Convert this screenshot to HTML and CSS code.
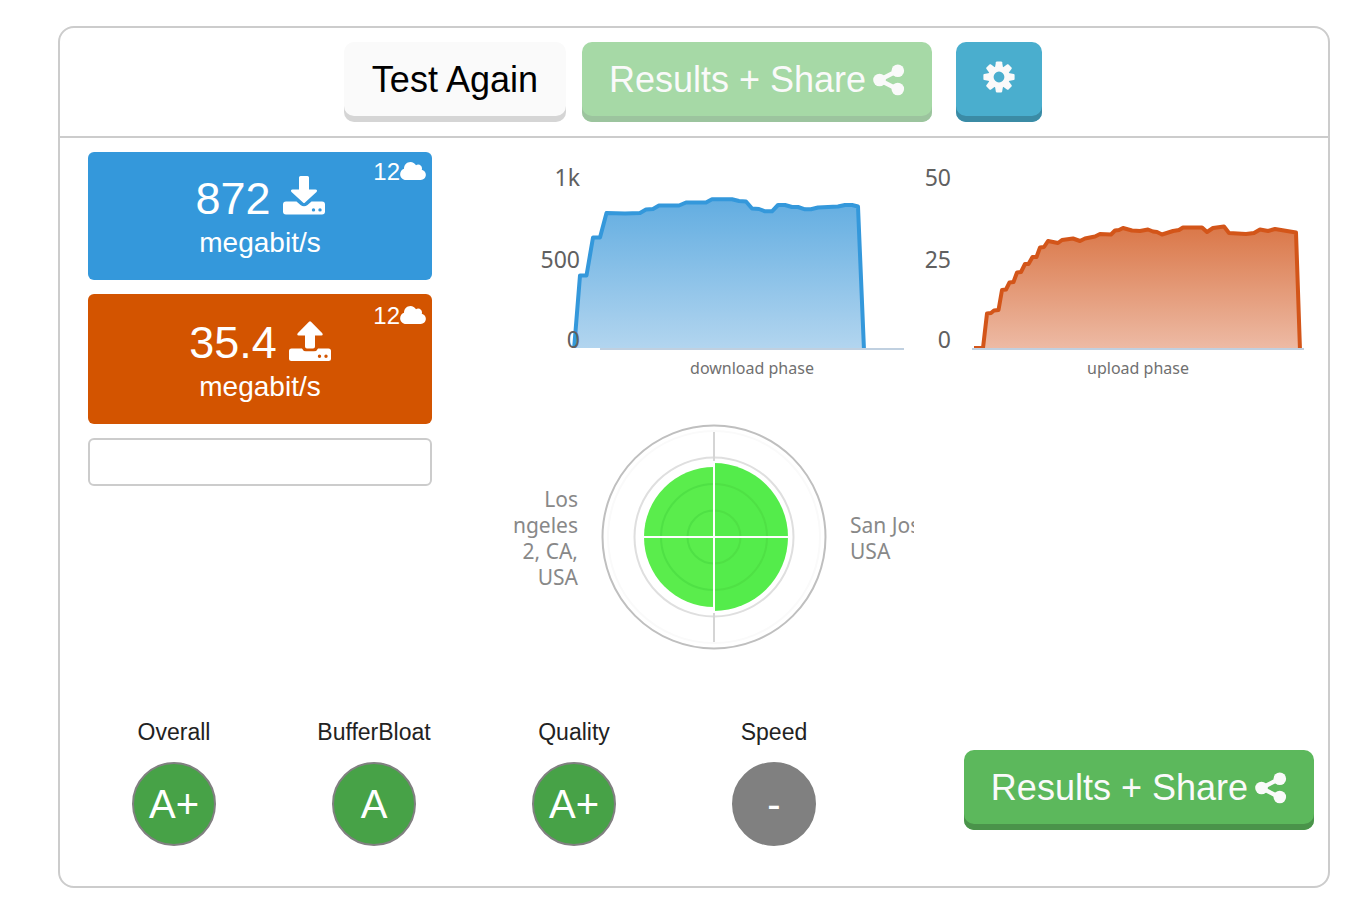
FILE: index.html
```html
<!DOCTYPE html>
<html lang="en">
<head>
<meta charset="utf-8">
<title>Speed Test</title>
<meta name="viewport" content="width=device-width, initial-scale=1">
<link rel="stylesheet" href="styles.css">
</head>
<body>
<svg class="sprite" aria-hidden="true">
  <symbol id="share" viewBox="0 0 32 32">
    <path d="M25 6.500 6.500 16 25 25.500" fill="none" stroke="currentColor" stroke-width="4.400"/>
    <circle cx="6.500" cy="16" r="6.300" fill="currentColor"/>
    <circle cx="24.800" cy="6.800" r="6.300" fill="currentColor"/>
    <circle cx="24.800" cy="25" r="6.300" fill="currentColor"/>
  </symbol>
  <symbol id="cloud" viewBox="0 32 640 448">
    <path fill="currentColor" d="M537.600 226.600c4.100-10.700 6.400-22.400 6.400-34.600 0-53-43-96-96-96-19.700 0-38.100 6-53.300 16.200C367 64.200 315.300 32 256 32c-88.400 0-160 71.600-160 160 0 2.700.1 5.400.2 8.100C40.200 219.800 0 273.200 0 336c0 79.500 64.500 144 144 144h368c70.700 0 128-57.300 128-128 0-61.900-44-113.600-102.400-125.400z"/>
  </symbol>
</svg>
<main class="panel">
  <header class="toolbar">
    <button class="btn btn-plain" type="button">Test Again</button>
    <button class="btn btn-share is-faded" type="button">Results + Share <svg class="icon-share"><use href="#share"/></svg></button>
    <button class="btn btn-settings" type="button" aria-label="Settings">
      <svg class="icon-cog" viewBox="-16 -16 32 32">
        <defs><path id="tooth" d="M-4-9.500 -3.100-14.800Q-2.900-15.600-2.100-15.600H2.100Q2.900-15.600 3.100-14.800L4-9.500Z"/></defs>
        <g fill="currentColor">
          <path fill-rule="evenodd" d="M0-10.800A10.800 10.800 0 1 1 0 10.800 10.800 10.800 0 1 1 0-10.800ZM0-5.400A5.400 5.400 0 1 0 0 5.400 5.400 5.400 0 1 0 0-5.400Z"/>
          <use href="#tooth"/><use href="#tooth" transform="rotate(45)"/><use href="#tooth" transform="rotate(90)"/><use href="#tooth" transform="rotate(135)"/>
          <use href="#tooth" transform="rotate(180)"/><use href="#tooth" transform="rotate(225)"/><use href="#tooth" transform="rotate(270)"/><use href="#tooth" transform="rotate(315)"/>
        </g>
      </svg>
    </button>
  </header>

  <div class="results">
    <section class="meters">
      <article class="meter meter-down">
        <span class="streams">12<svg class="icon-cloud"><use href="#cloud"/></svg></span>
        <div class="speed">872
          <svg class="icon-tray" viewBox="0 0 42 40">
            <path fill="currentColor" d="M17.500 1H24.500Q26 1 26 2.500V14.500H32.500Q35 15 33.500 17L22 27.500Q21 28.500 20 27.500L8.500 17Q7 15 9.500 14.500H16V2.500Q16 1 17.500 1Z"/>
            <path fill="currentColor" fill-rule="evenodd" d="M3 26.500H13.500L17.500 30Q21 32.500 24.500 30L28.500 26.500H39Q42 26.500 42 29.500V36.500Q42 39.500 39 39.500H3Q0 39.500 0 36.500V29.500Q0 26.500 3 26.500ZM30.500 33.200a1.700 1.700 0 1 0 0 3.400 1.700 1.700 0 1 0 0-3.400ZM37 33.200a1.700 1.700 0 1 0 0 3.400 1.700 1.700 0 1 0 0-3.400Z"/>
          </svg>
        </div>
        <div class="unit">megabit/s</div>
      </article>
      <article class="meter meter-up">
        <span class="streams">12<svg class="icon-cloud"><use href="#cloud"/></svg></span>
        <div class="speed">35.4
          <svg class="icon-tray" viewBox="0 0 42 40">
            <path fill="currentColor" d="M20 .8Q21 -.2 22 .8L33.300 12.200Q34.500 14.500 32.300 14.500H26V25.500Q26 27.500 24 27.500H18Q16 27.500 16 25.500V14.500H9.700Q7.500 14.500 8.700 12.200Z"/>
            <path fill="currentColor" fill-rule="evenodd" d="M2.500 27.500H13Q14 30.200 17 30.200H25Q28 30.200 29 27.500H39.500Q42 27.500 42 30V37.500Q42 40 39.500 40H2.500Q0 40 0 37.500V30Q0 27.500 2.500 27.500ZM30.500 33.500a1.700 1.700 0 1 0 0 3.400 1.700 1.700 0 1 0 0-3.400ZM37 33.500a1.700 1.700 0 1 0 0 3.400 1.700 1.700 0 1 0 0-3.400Z"/>
          </svg>
        </div>
        <div class="unit">megabit/s</div>
      </article>
      <input class="note" type="text" aria-label="Note">
    </section>

    <section class="graphs">
      <svg class="graph" viewBox="514 152 400 240" role="img" aria-label="Download phase chart">
        <defs>
          <linearGradient id="blue" x1="0" y1="0" x2="0" y2="1"><stop offset="0" stop-color="#62ade1"/><stop offset="1" stop-color="#b2d5ef"/></linearGradient>
          <clipPath id="plot-down"><rect x="560" y="152" width="354" height="196"/></clipPath>
        </defs>
        <line class="axis" x1="600" x2="904" y1="349" y2="349"/>
        <g clip-path="url(#plot-down)">
          <path fill="url(#blue)" d="M574 348 580 275.500H586.500L593 237.500H600L606.500 213 625 213.500 640 213 646 209.500 653 209 659 205.500H679L686 202.500H706L712 199.300H732L739 201 746 201.500 752 208.500 759 209 765 211.300H772L778 205H785L792 207H798L805 209.300H811L818 207.500 838 206.500 845 205H852L858 206.500 864 348Z"/>
          <path class="line line-down" d="M574 350 580 275.500H586.500L593 237.500H600L606.500 213 625 213.500 640 213 646 209.500 653 209 659 205.500H679L686 202.500H706L712 199.300H732L739 201 746 201.500 752 208.500 759 209 765 211.300H772L778 205H785L792 207H798L805 209.300H811L818 207.500 838 206.500 845 205H852L858 206.500 864 350"/>
        </g>
        <g class="ticks"><text x="580" y="186">1k</text><text x="580" y="268">500</text><text x="580" y="348">0</text></g>
        <text class="caption" x="752" y="374">download phase</text>
      </svg>
      <svg class="graph" viewBox="914 152 400 240" role="img" aria-label="Upload phase chart">
        <defs>
          <linearGradient id="orange" x1="0" y1="0" x2="0" y2="1"><stop offset="0" stop-color="#da7748"/><stop offset="1" stop-color="#edbaa4"/></linearGradient>
          <clipPath id="plot-up"><rect x="960" y="152" width="354" height="196"/></clipPath>
        </defs>
        <line class="axis" x1="972" x2="1304" y1="349" y2="349"/>
        <g clip-path="url(#plot-up)">
          <path fill="url(#orange)" d="M983 348 987 313.500 991 313 994 310.500 998.500 310 1002 290 1006 289.500 1009.500 282.500 1013.500 282 1017 272.500 1021 272 1025 264H1028.500L1032.500 257H1036.500L1040 247.500 1044 247 1048 241 1058 243 1062 240 1073 238.500 1080 241 1085 238.500 1095 236.500 1100 234 1111 234.500 1115 230.500 1119 230 1123 228 1132 230.500 1140 231 1148 229.500 1153 231.500 1157 232 1162 234.500 1173 231 1179 230 1183 227.500H1202L1207 232 1213 228 1224 226.500 1229 233 1246 234 1254 233 1260 229.500 1268 231 1275 229 1296 232.500 1300 348Z"/>
          <path class="line line-up" d="M974 348H983L987 313.500 991 313 994 310.500 998.500 310 1002 290 1006 289.500 1009.500 282.500 1013.500 282 1017 272.500 1021 272 1025 264H1028.500L1032.500 257H1036.500L1040 247.500 1044 247 1048 241 1058 243 1062 240 1073 238.500 1080 241 1085 238.500 1095 236.500 1100 234 1111 234.500 1115 230.500 1119 230 1123 228 1132 230.500 1140 231 1148 229.500 1153 231.500 1157 232 1162 234.500 1173 231 1179 230 1183 227.500H1202L1207 232 1213 228 1224 226.500 1229 233 1246 234 1254 233 1260 229.500 1268 231 1275 229 1296 232.500 1300 350"/>
        </g>
        <g class="ticks"><text x="951" y="186">50</text><text x="951" y="268">25</text><text x="951" y="348">0</text></g>
        <text class="caption" x="1138" y="374">upload phase</text>
      </svg>
      <svg class="graph radar" viewBox="514 400 400 280" role="img" aria-label="Latency radar">
        <g fill="none" stroke-width="2">
          <circle cx="714" cy="537" r="111.500" stroke="#bfbfbf"/>
          <circle cx="714" cy="537" r="106" stroke="#fafafa"/>
          <circle cx="714" cy="537" r="79.500" stroke="#dfdfdf"/>
          <path d="M714 432V461M714 613V642" stroke="#d5d5d5"/>
        </g>
        <path fill="#5aed4c" d="M714 467A70 70 0 0 0 714 607Z"/>
        <path fill="#54ec4b" d="M714 463A74 74 0 0 1 714 611Z"/>
        <g fill="none" stroke-width="2" stroke="#4fe145">
          <circle cx="714" cy="537" r="53"/><circle cx="714" cy="537" r="26.500"/>
        </g>
        <path d="M714 461V613M643 537H789" stroke="#fff" stroke-width="2"/>
        <g class="place place-left"><text x="578" y="507">Los</text><text x="578" y="533">Angeles</text><text x="578" y="559">2, CA,</text><text x="578" y="585">USA</text></g>
        <g class="place"><text x="850" y="533">San Jose,</text><text x="850" y="559">USA</text></g>
      </svg>
    </section>
  </div>

  <footer class="summary">
    <dl class="grades">
      <div class="grade"><dt>Overall</dt><dd>A+</dd></div>
      <div class="grade"><dt>BufferBloat</dt><dd>A</dd></div>
      <div class="grade"><dt>Quality</dt><dd>A+</dd></div>
      <div class="grade"><dt>Speed</dt><dd class="ungraded">-</dd></div>
    </dl>
    <button class="btn btn-share" type="button">Results + Share <svg class="icon-share"><use href="#share"/></svg></button>
  </footer>
</main>
</body>
</html>
```
FILE: styles.css
```css
* { box-sizing: border-box; }

body {
  margin: 0;
  padding: 26px 30px 16px 58px;
  background: #fff;
  color: #222;
  font-family: "Liberation Sans", Arial, sans-serif;
}

svg { display: block; }
.sprite { display: none; }

.panel {
  border: 2px solid #ccc;
  border-radius: 16px;
}

/* Buttons */
.btn {
  display: flex;
  align-items: center;
  justify-content: center;
  gap: 7px;
  height: 80px;
  padding: 0 27px 4px;
  border: 0;
  border-radius: 10px;
  box-shadow: inset 0 -6px 0 rgba(0, 0, 0, 0.2);
  color: #fafafa;
  font: 36px "Liberation Sans", Arial, sans-serif;
  white-space: nowrap;
  cursor: pointer;
  flex: none;
}
.btn-plain { padding: 0 28px 4px; background: #fafafa; color: #000; box-shadow: inset 0 -6px 0 #d5d5d5; }
.btn-share { background: #5cb85c; box-shadow: inset 0 -6px 0 #4a934a; }
.btn-share.is-faded { background: #a6d9a6; box-shadow: inset 0 -6px 0 #9cc49e; }
.btn-settings { margin-left: 8px; background: #4aaece; box-shadow: inset 0 -6px 0 #3b8ba5; }
.icon-share { width: 32px; height: 32px; }
.icon-cog { width: 32px; height: 32px; margin-bottom: 6px; }

.toolbar {
  display: flex;
  justify-content: center;
  gap: 16px;
  padding: 14px 16px 14px 14px;
  border-bottom: 2px solid #ccc;
}

/* Measured speeds */
.results {
  display: grid;
  grid-template-columns: 344px 1fr;
  gap: 82px;
  padding: 14px 14px 0 28px;
}
.meters {
  display: flex;
  flex-direction: column;
  gap: 14px;
}
.meter {
  position: relative;
  padding: 21px 0 19px;
  border-radius: 6px;
  color: #fff;
  text-align: center;
}
.meter-down { background: #3498db; }
.meter-up { background: #d35400; padding: 23px 0 19px; }
.speed {
  display: flex;
  align-items: center;
  justify-content: center;
  gap: 12px;
  font-size: 45px;
  line-height: 52px;
}
.icon-tray { width: 42px; height: 40px; margin-bottom: 8px; }
.meter-up .icon-tray { margin-bottom: 4px; }
.unit { font-size: 28px; line-height: 36px; }
.streams {
  position: absolute;
  top: 6px;
  right: 6px;
  display: flex;
  align-items: center;
  font-size: 24px;
  line-height: 28px;
}
.meter-up .streams { top: 8px; }
.icon-cloud { width: 26px; height: 18px; margin-bottom: 2px; }
.note {
  width: 100%;
  height: 48px;
  padding: 0 12px;
  border: 2px solid #ccc;
  border-radius: 6px;
  background: #fff;
  font-size: 24px;
}

/* Graphs */
.graphs {
  display: grid;
  grid-template-columns: 1fr 1fr;
  row-gap: 8px;
}
.graph {
  width: 100%;
  overflow: hidden;
  font-family: "Noto Sans", "Open Sans", sans-serif;
}
.axis { stroke: #c0d0e0; stroke-width: 2; }
.line { fill: none; stroke-width: 4; stroke-linejoin: round; }
.line-down { stroke: #3498db; }
.line-up { stroke: #d35519; }
.ticks { fill: #606060; font-size: 23px; text-anchor: end; }
.caption { fill: #707070; font-size: 16px; text-anchor: middle; }
.place { fill: #888; font-size: 21px; }
.place-left { text-anchor: end; }

/* Grades */
.summary {
  display: flex;
  justify-content: space-between;
  padding: 38px 14px 40px;
}
.grades {
  display: grid;
  grid-template-columns: repeat(4, 200px);
  margin: 0;
}
.grade {
  display: flex;
  flex-direction: column;
  align-items: center;
  gap: 16px;
}
.grade dt { font-size: 23px; line-height: 28px; }
.grade dd {
  width: 84px;
  height: 84px;
  margin: 0;
  border: 2px solid #808080;
  border-radius: 50%;
  background: #47a247;
  color: #fff;
  font-size: 40px;
  line-height: 80px;
  text-align: center;
}
.grade .ungraded { background: #808080; }
.summary .btn { margin-top: 32px; }
```
